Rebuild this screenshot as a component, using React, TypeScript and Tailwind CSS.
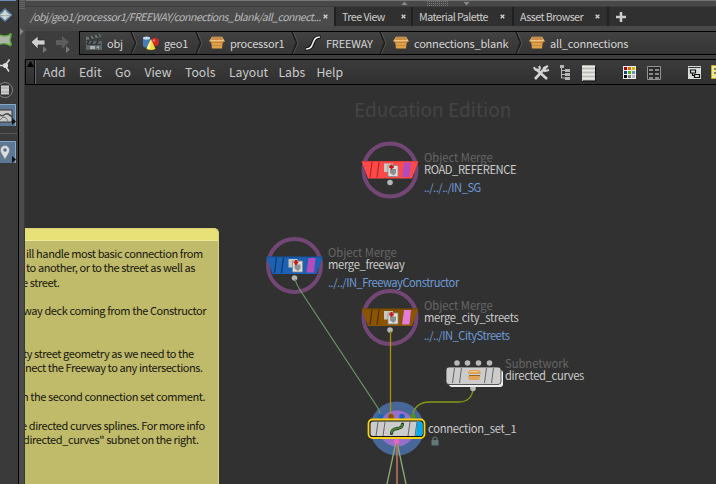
import React from 'react';

const FONT = "font-['Noto_Sans_CJK_SC','Noto_Sans',sans-serif]";

function Toolbar() {
  return (
    <svg className="block h-[484px] w-[18px] shrink-0 bg-[#3a3a3a]" viewBox="0 0 18 484">
      <rect width="16" height="1" fill="#6d8fb5" />
      <path d="M5 8.500 12 15 5 21.500-2 15Z" fill="#5d7f9f" stroke="#4b7db0" />
      <path d="M5 10 10 15H0ZM0 16h10l-5 4Z" fill="#c5ccd0" />
      <path d="M5 10v10M-1 15h12" stroke="#ece4c9" strokeWidth=".8" />
      <path d="M-1 34.500q6 3 11 0l1 2q-2 3.500 0 7l-1 2q-5-3-11-1" fill="#aeb5a8" stroke="#5fa53c" strokeWidth="1.300" />
      <g fill="#65b83d"><circle cx="10.500" cy="34.500" r="1.300" /><circle cx="10.500" cy="44.500" r="1.300" /></g>
      <path d="M0 65.500h5M5 65.500l4.500-6M5 65.500l4 6" stroke="#ddd" strokeWidth="1.500" />
      <circle cx="5.500" cy="65.500" r="2.600" fill="#ddd" />
      <circle cx="5" cy="90" r="7.500" fill="#333" stroke="#858585" />
      <path d="M1 85.500h8v9H1z" fill="#ccc" /><path d="M1 88h8M1 92h8" stroke="#999" strokeWidth=".8" />
      <path d="M0 104h16v22H0z" fill="#5d7894" /><path d="M0 104.500h15.500V126" fill="none" stroke="#86a8ca" />
      <path d="M-1 110h13v12H-1z" fill="#c9c9c5" stroke="#333" />
      <path d="M-1 114q3 3 5 1t4-1 4 3" fill="none" stroke="#484848" strokeWidth="1.400" />
      <path d="M0 120l3-3 3 1 2 3" fill="none" stroke="#777" />
      <path d="M12 118v7l4-3.500z" fill="#111" />
      <path d="M0 133.500h17" stroke="#595959" />
      <path d="M0 141h16v22H0z" fill="#5d7894" /><path d="M0 141.500h15.500V163" fill="none" stroke="#86a8ca" />
      <path d="M5 160C4 156 .5 154 .5 150a4.500 4.500 0 0 1 9 0c0 4-3.500 6-4.500 10Z" fill="#ddd" stroke="#777" strokeWidth=".5" />
      <circle cx="5" cy="150" r="1.800" fill="#57718c" /><path d="M12 156v7l4-3.500z" fill="#111" />
    </svg>
  );
}

function Splitter() {
  return (
    <svg className="block h-[484px] w-[7px] shrink-0 border-l border-black bg-[#4b4b4b]" viewBox="0 0 6 484">
      <path d="M1 0v10M3 0v10M5 0v10" stroke="#858585" strokeDasharray="1 1" />
      <path d="M1 28v7l3.500-3.500z" fill="#888" />
      <path d="M5.500 60v424" stroke="#3a3a3a" />
    </svg>
  );
}

const Close = () => (
  <svg className="h-[5px] w-[5px] shrink-0" viewBox="0 0 5 5">
    <path d="M.7.7l3.600 3.600M4.300.7.7 4.300" stroke="#ccc" strokeWidth="1.400" />
  </svg>
);

function Tab({ label, className }: { label: string; className: string }) {
  return (
    <div className={`flex h-[19px] shrink-0 items-center justify-between border-l-2 border-[#202020] bg-[#303030] pl-[6px] ${className}`}>
      <span className="tracking-[-0.54px]">{label}</span><Close />
    </div>
  );
}

function TabBar() {
  return (
    <div className="h-[31px] bg-[#484848]">
      <svg className="block h-[7px] w-[691px]" viewBox="25 0 691 7">
        <path d="M26 .5h690" stroke="#737773" /><path d="M25 6.500h691" stroke="#3d3d3d" />
        <path d="M401.500 5h6L404.500 1.500zM463.500 2h6L466.500 5.500z" fill="#888" />
        <path d="M427 1.500h21M427 3.500h21M427 5.500h21" stroke="#7c7c7c" strokeDasharray="1 1" />
      </svg>
      <div className="flex h-[19px] text-[10.7px] leading-[19px] whitespace-nowrap text-[#ccc]">
        <div className="flex w-[309px] shrink-0 items-center justify-between bg-[#4b4b4b] pr-[6px] pl-[5px] text-[#bbb]">
          <span className="text-[10.5px] tracking-[-0.5px] italic">/obj/geo1/processor1/FREEWAY/connections_blank/all_connect...</span><Close />
        </div>
        <Tab label="Tree View" className="w-[77px] pr-[5px]" />
        <Tab label="Material Palette" className="w-[101px] pr-[7px]" />
        <Tab label="Asset Browser" className="w-[95px] pr-[7px]" />
        <div className="flex grow items-center border-l-2 border-[#202020] bg-[#303030] pl-[7px]">
          <svg className="h-[10px] w-[10px]" viewBox="0 0 10 10"><path d="M5 0v10M0 5h10" stroke="#ccc" strokeWidth="2.500" /></svg>
        </div>
      </div>
    </div>
  );
}

const Box = () => (
  <svg className="h-[13px] w-4 shrink-0" viewBox="0 0 16 13">
    <path d="M2 4h12l-1 8.500H3Z" fill="#dfa04a" /><path d="M3 .8h10l3 4.700H0Z" fill="#edc785" />
    <path d="M3 1h10l1 3H2Z" fill="#c98d48" /><path d="M0 5.500h16L13.500 7h-11Z" fill="#c98635" />
    <path d="M3 9.500h10" stroke="#cb8a3a" />
  </svg>
);
const Clapper = () => (
  <svg className="-mr-px h-[17px] w-[18px] shrink-0" viewBox="0 0 18 17">
    <path d="M1 7h16v9H1z" fill="#5c6668" /><path d="M1 3 15 0l1 3L1 6Z" fill="#6d7677" />
    <path d="M4 2l2 3m2-4 2 3m2-4 2 3M4 7l-2 3m6-3-2 3m7-3-2 3" stroke="#292d2d" strokeWidth="1.500" />
    <path d="M2 10.500h14" stroke="#333" /><path d="M5 12h5v3H5zm6 1 3-1v3z" fill="#a8afaf" />
  </svg>
);
const Shapes = () => (
  <svg className="-mr-px h-4 w-[18px] shrink-0" viewBox="0 0 18 16">
    <path d="M1 3v8c1 2 6 2 7 0V3Z" fill="#477eb9" /><ellipse cx="4.500" cy="3" rx="3.500" ry="1.500" fill="#c2dcf2" />
    <circle cx="13" cy="7" r="4" fill="#c72b24" /><circle cx="12" cy="5.500" r="1.200" fill="#e87970" />
    <path d="M9 4 13.500 14q-4.500 2-9 0Z" fill="#f1dc42" /><path d="m9 4-1 10-3.500-.5z" fill="#fff19a" />
  </svg>
);
const Curve = () => (
  <svg className="h-4 w-4 shrink-0" viewBox="0 0 16 16">
    <path d="M1.500 14C10 14 6 2 14.500 2" fill="none" stroke="#111" strokeWidth="3.600" strokeLinecap="round" />
    <path d="M1.500 14C10 14 6 2 14.500 2" fill="none" stroke="#eee" strokeWidth="1.600" strokeLinecap="round" />
  </svg>
);

function Crumb({ icon, label, className, last }: { icon: React.ReactNode; label: string; className: string; last?: boolean }) {
  return (
    <div className={`flex h-[22px] shrink-0 items-center ${className}`}>
      {icon}<span className="ml-[5px] grow leading-[20px]">{label}</span>
      {!last && (
        <svg className="h-[22px] w-[8px] shrink-0" viewBox="0 0 8 22">
          <path d="M1 0 5.500 11 1 22" fill="none" stroke="#1d1d1d" strokeWidth="1.500" /><path d="M2.500 0 7 11 2.500 22" fill="none" stroke="#5c5c5c" strokeWidth=".7" />
        </svg>
      )}
    </div>
  );
}

function PathBar() {
  return (
    <div className="flex h-[28px] bg-[#3d3d3d] text-[11px] tracking-[-0.2px] whitespace-nowrap text-[#d5d5d5]">
      <svg className="h-[24px] w-[54px] shrink-0" viewBox="25 31 54 24">
        <path d="m31 42 7-6v4h7v5h-7v4Z" fill="#d0d0d0" stroke="#292929" strokeWidth=".7" />
        <path d="m69 42-7-6v4h-6v5h6v4Z" fill="#5c5c5c" />
        <path d="m43 46 4 3.500-4 3.500zM66 46l4 3.500-4 3.500z" fill="#777" />
      </svg>
      <div className="flex h-[24px] grow items-center border-y border-l border-black bg-[#3b3b3b] bg-linear-to-b from-[#424242] to-[#343434] pl-[5px]">
        <Crumb icon={<Clapper />} label="obj" className="w-[53px] pb-px" />
        <div className="w-[4px]" />
        <Crumb icon={<Shapes />} label="geo1" className="w-[61px] pb-px" />
        <div className="w-[6px]" />
        <Crumb icon={<Box />} label="processor1" className="w-[90px] pb-px" />
        <div className="w-[6px]" />
        <Crumb icon={<Curve />} label="FREEWAY" className="w-[82px] pb-px" />
        <div className="w-[6px]" />
        <Crumb icon={<Box />} label="connections_blank" className="w-[130px] pb-px" />
        <div className="w-[6px]" />
        <Crumb icon={<Box />} label="all_connections" className="grow pb-px" last />
      </div>
    </div>
  );
}

const menus = [
  ['Add', 'w-[36px]'], ['Edit', 'w-[36px]'], ['Go', 'w-[29.5px]'], ['View', 'w-[40.5px]'], ['Tools', 'w-[44px]'],
  ['Layout', 'w-[49.5px]'], ['Labs', 'w-[38px]'], ['Help', 'w-[40px]'],
];

const palette = ['#b00000', '#dc6b00', '#dcb800', '#14457c', '#55b800', '#6796c5', '#000000', '#777777', '#bbbbbb'];

function MenuBar() {
  return (
    <div className="flex h-[26px] border-y border-black bg-[#3b3b3b] bg-linear-to-b from-[#3c3c3c] to-[#303030] text-[12.2px] leading-[24px] whitespace-nowrap text-[#ccc]">
      <svg className="h-[24px] w-[18px] shrink-0" viewBox="25 60 18 24">
        <path d="M25.500 60v24M34.500 60v24" stroke="#080808" /><path d="M35.500 60v24" stroke="#666" />
        <path d="m27 67 3.500-6 3.500 6Z" fill="#000" />
      </svg>
      {menus.map(([m, w]) => <span key={m} className={`shrink-0 ${w}`}>{m}</span>)}
      <div className="grow" />
      <svg className="h-[24px] w-[186px] shrink-0" viewBox="530 60 186 24">
        <path d="m536 69 11 10M546 67l-11 12" stroke="#d3d3d3" strokeWidth="2.600" />
        <path d="M534 67q1 4 5 3l1-2-1-2M548 66l-4 2 1 3 4-1" fill="none" stroke="#d3d3d3" strokeWidth="2" />
        <path d="M561.500 66v12h4M561.500 70.500h4M561.500 74.500h4" fill="none" stroke="#b9b9b9" />
        <path d="M560 65h4v3h-4zm5 4h5v3h-5zm0 4h5v3h-5zm0 4h5v3h-5z" fill="#b5b5b5" />
        <path d="M582 65.500h13V81h-13z" fill="#bcbcb8" /><path d="M582 66.500h13m-13 4h13m-13 4h13m-13 4h13" stroke="#e9e9e7" strokeWidth="1.800" />
        <path d="M595.500 67v14H583" fill="none" stroke="#111" />
        <path d="M623 66h13v13h-13z" fill="#eee" />
        {palette.map((c, i) => <rect key={c} x={624 + (i % 3) * 4} y={67 + Math.floor(i / 3) * 4} width="3" height="3" fill={c} />)}
        <path d="M647.500 66.500h13v13h-13z" fill="#292929" stroke="#929292" />
        <path d="M649 70h4m2 0h4m-10 4h4m2 0h4m-10 4h4m2 0h4" stroke="#aaa" strokeWidth="1.500" />
        <path d="M688 66h13v13h-13z" fill="#d7ddd9" /><path d="M688.500 67.500h12" stroke="#333" />
        <path d="M690.500 70h5v3h-5zm4 4.500h5v3h-5zm-2-1v2h2" fill="none" stroke="#111" strokeWidth="1.200" />
        <path d="M711.500 65.500h5v13h-5z" fill="#f0e68b" stroke="#bcaa3e" /><path d="M714 69h2m-2 4h2" stroke="#222" />
      </svg>
    </div>
  );
}

const note = [
  ['ill handle most basic connection from', 'pl-px'],
  ['to another, or to the street as well as', 'pl-px'],
  ['e street.', '-ml-[3px]'],
  ['', ''],
  ['way deck coming from the Constructor', '-ml-[2px]'],
  ['', ''], ['', ''],
  ['ty street geometry as we need to the', '-ml-[2px]'],
  ['nect the Freeway to any intersections.', 'pl-0'],
  ['', ''],
  ['n the second connection set comment.', '-ml-[3px]'],
  ['', ''],
  ['e directed curves splines. For more info', '-ml-[4px]'],
  ['directed_curves" subnet on the right.', '-ml-[2px]'],
];

function StickyNote() {
  return (
    <div className="absolute top-[143px] left-0 h-[270px] w-[194px] overflow-hidden rounded-tr-[5px] border-t border-r border-[#d9d27a] bg-[#c0ba6b]">
      <div className="h-[12px] border-b border-[#f2ec96] bg-[#e8e178]" />
      <div className="pt-[5px] text-[11px] leading-[14.3px] tracking-[-0.41px] whitespace-nowrap text-[#17170c]">
        {note.map(([t, c], i) => <div key={i} className={`h-[14.3px] ${c}`}>{t}</div>)}
      </div>
    </div>
  );
}

function MergeNode({ x, y, color, dark, flag }: { x: number; y: number; color: string; dark: string; flag: string }) {
  return (
    <g transform={`translate(${x} ${y})`}>
      <circle r="26.500" fill="none" stroke="#734775" strokeWidth="4" />
      <path d="M-28.500-9h57l-6.500 17.500h-44Z" fill={color} />
      <path d="M-28.500-8.500h57" stroke={dark} strokeOpacity=".4" />
      <path d="m-18-8-2 15.500M-11-8l-2 15.500" stroke={dark} strokeWidth="1.200" />
      <path d="M14-7.500h7l-1.500 14.500h-7.500Z" fill={flag} />
      <path d="M-6-6.500H3V2H-6z" fill="#c8c8c4" /><path d="M-2-4.500H8V6.500H-2z" fill="#dededb" stroke="#888" strokeWidth=".8" />
      <path d="M0-1h6v4L3.500 5.500 0 3Z" fill="#8b8f91" /><path d="M1.500-5.500v5M-.8-3h4.600" stroke="#cc1515" strokeWidth="2" />
      <circle cy="12.500" r="2.800" fill="#b5b5b5" />
    </g>
  );
}

const labels = [
  { x: 424, y: 157, type: 'Object Merge', name: 'ROAD_REFERENCE', path: '../../../IN_SG', spacing: 'tracking-[-0.42px]' },
  { x: 328, y: 252, type: 'Object Merge', name: 'merge_freeway', path: '../../IN_FreewayConstructor', spacing: 'tracking-[-0.32px]' },
  { x: 424, y: 305, type: 'Object Merge', name: 'merge_city_streets', path: '../../IN_CityStreets', spacing: 'tracking-[-0.28px]' },
  { x: 505, y: 363, type: 'Subnetwork', name: 'directed_curves', path: '', spacing: 'tracking-[-0.32px]' },
  { x: 428, y: 416, type: '', name: 'connection_set_1', path: '', spacing: 'tracking-[-0.27px]' },
];

function Network() {
  return (
    <div className="relative h-[399px] overflow-hidden bg-[#313131] whitespace-nowrap">
      <div className="absolute top-[9px] left-[329px] text-[19px] leading-[30px] text-[#444]">Education Edition</div>
      <StickyNote />
      <svg className="absolute inset-0 h-[399px] w-[691px]" viewBox="25 85 691 399">
        <circle cx="397" cy="428.500" r="27" fill="#466798" /><circle cx="397" cy="428.500" r="18" fill="#9670c8" />
        <MergeNode x={390} y={170} color="#ff4848" dark="#aa2828" flag="#b24cbb" />
        <MergeNode x={294.5} y={265.5} color="#1c62b4" dark="#0c3564" flag="#b54cbd" />
        <MergeNode x={390} y={317.5} color="#8b5500" dark="#4b2c00" flag="#e47cda" />
        <path d="M295 279Q296 284 300 290L376 405Q380 411 380.500 416" fill="none" stroke="#6c9668" strokeWidth="1.200" />
        <path d="M390.500 331v84" stroke="#b39000" strokeWidth="1.300" />
        <path d="M473 388C473 397 467 402 459 402H429C420 402 413 408 413 415" fill="none" stroke="#829b17" strokeWidth="1.300" />
        <path d="m396 442-9 42M397 442l9 42" stroke="#8fac72" strokeWidth="1.300" /><path d="M397 442v42" stroke="#b1735a" strokeWidth="1.700" />
        <g fill="#b8b8b8"><circle cx="457" cy="363" r="2.800" /><circle cx="467.500" cy="363" r="2.800" /><circle cx="478.500" cy="363" r="2.800" /><circle cx="489.500" cy="363" r="2.800" /><circle cx="473" cy="388.500" r="2.800" /></g>
        <rect x="449" y="370" width="54" height="17" rx="3" fill="#eee" />
        <rect x="446" y="367" width="55" height="17.500" rx="3" fill="#ccc" stroke="#313131" strokeWidth=".8" />
        <path d="m454.500 368-2 15m9-15-2 15m27-15-2 15m9-15-2 15" stroke="#666" />
        <path d="M470 370h8q3 1 3 4h-13q0-3 2-4ZM468 376h12.500l-1.500 4h-10z" fill="#e0a456" /><path d="M469 375.500h11" stroke="#9a6029" /><path d="M470 371.500h8" stroke="#f0cc90" />
        <circle cx="380.500" cy="416.500" r="2.800" fill="#1c62b4" /><circle cx="391" cy="416.500" r="2.800" fill="#8b5500" /><circle cx="402" cy="416.500" r="2.800" fill="#1c62b4" /><circle cx="413" cy="416.500" r="2.800" fill="#528e28" />
        <rect x="368.500" y="419.500" width="56" height="18.500" rx="4" fill="#111" stroke="#f8d213" strokeWidth="1.800" />
        <rect x="370.500" y="421.500" width="52" height="14.500" rx="2.500" fill="#ccc" />
        <path d="M417 421.500h3q2.500 0 2.500 2.500v9.500q0 2.500-2.500 2.500h-4Z" fill="#00aaf0" />
        <path d="m378 422-2 14m9-14-2 14m27-14-2 14m9-14-2 14" stroke="#666" />
        <path d="M391.500 433.500C392 425 402 432 402.500 424" fill="none" stroke="#1c421a" strokeWidth="3.200" strokeLinecap="round" /><path d="M391.500 433.500C392 425 402 432 402.500 424" fill="none" stroke="#56893b" strokeWidth="1.600" />
        <circle cx="396.500" cy="441.500" r="2.800" fill="#e765c5" />
        <path d="M431.500 440h7v5.500h-7z" fill="#647777" /><path d="M433 440v-1q0-2 2-2t2 2v1" fill="none" stroke="#647777" strokeWidth="1.200" />
      </svg>
      {labels.map((l) => (
        <div key={l.name} className="absolute text-[11.2px] leading-[12px] text-[#ccc]" style={{ left: l.x - 25, top: l.y - 85 - 6 }}>
          <div className="h-[12px] text-[#666]">{l.type}</div>
          <div className={l.spacing}>{l.name}</div>
          {l.path && <div className="mt-[6px] tracking-[-0.5px] text-[#6e9bd6]">{l.path}</div>}
        </div>
      ))}
    </div>
  );
}

export default function App() {
  return (
    <div className={`flex h-[484px] w-[716px] overflow-hidden bg-[#313131] ${FONT}`}>
      <Toolbar />
      <Splitter />
      <main className="w-[691px] shrink-0">
        <TabBar />
        <PathBar />
        <MenuBar />
        <Network />
      </main>
    </div>
  );
}
